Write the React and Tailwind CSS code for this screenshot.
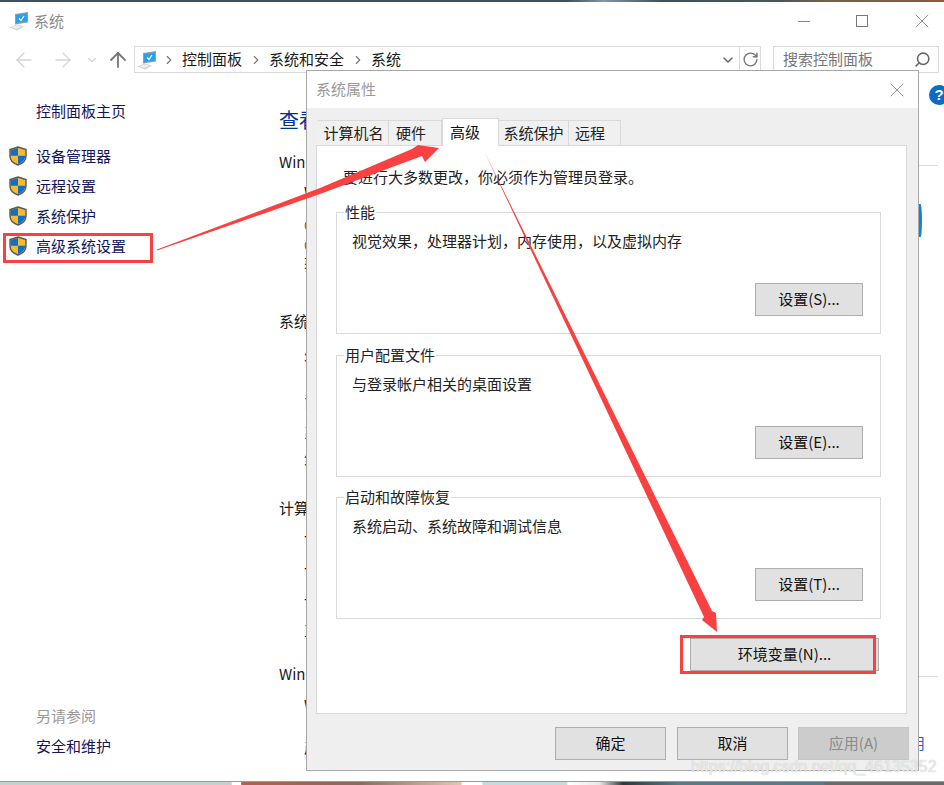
import { Search, ArrowLeft, ArrowRight, ArrowUp, ChevronDown, ChevronRight, RotateCw, X } from 'lucide-react'

function MonitorIcon({ className }) {
  return (
    <svg viewBox="0 0 20 20" className={className}>
      <path d="M0 16.500l8-3 7 2-7 4z" fill="#cfd2d5" />
      <path d="M2 16.500l6-2.200 4.500 1.300-5 2.400z" fill="#eceef0" />
      <path d="M6 3l13-2v10.500l-13 2z" fill="#8fa0ac" />
      <path d="M7 3.900l11-1.700v8.400l-11 1.700z" fill="#2aa0ea" />
      <path d="M10 7.500l2 2 3-4.500" fill="none" stroke="#fff" strokeWidth="1.200" />
    </svg>
  )
}

function Shield() {
  return (
    <svg viewBox="0 0 18 20" className="h-5 w-[18px] shrink-0">
      <path d="M9 1l8 2.500v6.500c0 4.500-3.500 7.500-8 9-4.500-1.500-8-4.500-8-9v-6.500z" fill="#f7b92f" stroke="#57585a" strokeWidth="1.400" />
      <path d="M9 1.900v7.900h-7.300v-5.700zM9 9.800h7.300c-.1 4.200-3.300 6.700-7.300 8.200z" fill="#0f6fc6" />
    </svg>
  )
}

function SideLink({ children }) {
  return (
    <div className="flex h-[30px] items-center pl-[9px]">
      <Shield />
      <span className="ml-[9px] text-[#14145c]">{children}</span>
    </div>
  )
}

function Line({ className, children }) {
  return <div className={`h-5 whitespace-nowrap leading-5 ${className}`}>{children}</div>
}

function Crumb({ children }) {
  return (
    <>
      <ChevronRight className="ml-[5px] mr-[4px] h-[14px] w-[14px] text-[#777]" strokeWidth={2} />
      <span className="mx-[2px] text-[#1a1a1a]">{children}</span>
    </>
  )
}

function GrayButton({ className, disabled, children }) {
  return (
    <div
      className={`flex h-[33px] items-center justify-center border ${
        disabled ? 'border-[#c6c6c6] bg-[#cccccc] text-[#8a8a8a]' : 'border-[#adadad] bg-[#e1e1e1] text-[#111]'
      } ${className}`}
    >
      {children}
    </div>
  )
}

function Group({ title, text, button, className }) {
  return (
    <fieldset className={`flex h-[132px] flex-col border border-[#d9d9d9] ${className}`}>
      <legend className="ml-[7px] h-5 px-px leading-5 text-[#222]">{title}</legend>
      <div className="ml-[15px] mt-[9px] h-5 leading-5 text-[#222]">{text}</div>
      <GrayButton className="mb-[15px] mr-[17px] mt-[32px] w-[108px] self-end">{button}</GrayButton>
    </fieldset>
  )
}

const tabClass = 'flex h-[25px] items-center border border-b-0 border-l-0 border-[#d9d9d9] bg-[#f0f0f0] text-[#222]'

function SystemProperties() {
  return (
    <div className="absolute left-[306px] top-[70px] flex h-[701px] w-[613px] flex-col border border-[#a8a8a8] bg-white">
      <div className="flex h-[37px] shrink-0 items-center justify-between pl-[9px] pr-[9px]">
        <span className="text-[#9a9a9a]">系统属性</span>
        <X className="h-6 w-6 text-[#777]" strokeWidth={0.800} />
      </div>
      <div className="flex flex-1 flex-col bg-[#efefef] pl-[9px] pr-[10px] pt-[10px]">
        <div className="z-10 flex h-[27px] items-end pl-[2px]">
          <div className={`${tabClass} w-[71px] justify-center border-l pl-px`}>计算机名</div>
          <div className={`${tabClass} w-[53px] pl-[7px]`}>硬件</div>
          <div className="mb-[-1px] flex h-[28px] w-[57px] items-start border border-b-0 border-[#d9d9d9] bg-white pl-[7px] pt-[2px] text-[#111]">高级</div>
          <div className={`${tabClass} w-[70px] justify-center`}>系统保护</div>
          <div className={`${tabClass} w-[52px] pl-[6px]`}>远程</div>
        </div>
        <div className="flex h-[569px] w-[591px] flex-col border border-[#d9d9d9] bg-white pl-[19px] pr-[25px]">
          <div className="ml-[7px] mt-[21px] h-5 leading-5 text-[#222]">要进行大多数更改，你必须作为管理员登录。</div>
          <Group className="mt-[15px]" title="性能" text="视觉效果，处理器计划，内存使用，以及虚拟内存" button="设置(S)..." />
          <Group className="mt-[11px]" title="用户配置文件" text="与登录帐户相关的桌面设置" button="设置(E)..." />
          <Group className="mt-[10px]" title="启动和故障恢复" text="系统启动、系统故障和调试信息" button="设置(T)..." />
          <GrayButton className="mr-[2px] mt-[19px] w-[189px] self-end">环境变量(N)...</GrayButton>
        </div>
        <div className="mr-[-1px] mt-[13px] flex justify-end gap-[11px]">
          <GrayButton className="w-[111px]">确定</GrayButton>
          <GrayButton className="w-[111px]">取消</GrayButton>
          <GrayButton disabled className="ml-[-1px] w-[111px]">应用(A)</GrayButton>
        </div>
      </div>
    </div>
  )
}

export default function App() {
  return (
    <div className="relative flex h-[785px] w-[944px] flex-col overflow-hidden bg-white font-['Microsoft_YaHei','Noto_Sans_CJK_SC',sans-serif] text-[15px]">
      <div className="h-[2px] shrink-0 bg-[linear-gradient(90deg,#3d525c_0%,#3d525c_60%,#7f98a2_64%,#3d525c_70%,#46565c_82%,#7a6248_88%,#8a5a3a_100%)]" />

      {/* control panel window */}
      <div className="flex min-h-0 flex-1 flex-col">
        <div className="flex h-[38px] shrink-0 items-center pl-[9px]">
          <MonitorIcon className="h-5 w-5" />
          <span className="ml-[5px] text-[#8a8a8a]">系统</span>
          <div className="ml-auto h-px w-3 bg-[#888]" />
          <div className="ml-[46px] h-3 w-3 border border-[#777]" />
          <X className="ml-[42px] mr-[10px] h-6 w-6 text-[#777]" strokeWidth={0.800} />
        </div>

        <div className="mt-[6px] flex h-[27px] shrink-0 items-center pl-[12px]">
          <ArrowLeft className="h-6 w-6 text-[#d4d4d4]" strokeWidth={1.300} />
          <ArrowRight className="ml-[15px] h-6 w-6 text-[#d4d4d4]" strokeWidth={1.300} />
          <ChevronDown className="ml-[10px] h-[14px] w-[14px] text-[#d4d4d4]" strokeWidth={2} />
          <ArrowUp className="ml-[7px] h-6 w-6 text-[#777]" strokeWidth={1.800} />
          <div className="ml-[4px] flex h-[27px] w-[627px] items-center border border-[#d9d9d9] pl-[2px]">
            <MonitorIcon className="h-5 w-5" />
            <Crumb>控制面板</Crumb>
            <Crumb>系统和安全</Crumb>
            <Crumb>系统</Crumb>
            <ChevronDown className="ml-auto mr-[3px] h-[16px] w-[16px] text-[#666]" strokeWidth={2.200} />
            <div className="flex h-full w-[21px] items-center justify-center border-l border-[#d9d9d9]">
              <RotateCw className="h-[17px] w-[17px] text-[#777]" strokeWidth={2} />
            </div>
          </div>
          <div className="ml-[12px] flex h-[27px] w-[166px] items-center justify-between border border-[#d9d9d9] pl-[9px] pr-[7px] text-[#777]">
            <span>搜索控制面板</span>
            <Search className="h-[17px] w-[17px] -scale-x-100 text-[#666]" strokeWidth={2.200} />
          </div>
        </div>

        <div className="mt-[24px] flex min-h-0 flex-1">
          <aside className="flex w-[279px] shrink-0 flex-col">
            <div className="mt-[-1px] flex h-[30px] items-center pl-[36px] text-[#14145c]">控制面板主页</div>
            <div className="mt-[15px]">
              <SideLink>设备管理器</SideLink>
              <SideLink>远程设置</SideLink>
              <SideLink>系统保护</SideLink>
              <SideLink>高级系统设置</SideLink>
            </div>
            <div className="mt-auto pb-[20px] pl-[36px]">
              <div className="flex h-[30px] items-center text-[#999]">另请参阅</div>
              <div className="flex h-[30px] items-center text-[#14145c]">安全和维护</div>
            </div>
          </aside>

          {/* the dialog covers this column, only the first glyphs peek out */}
          <main className="w-[27px] shrink-0 text-[#1a1a1a]">
            <div className="flex h-[46px] items-center whitespace-nowrap text-[20px] text-[#003399]">查看</div>
            <Line className="mt-[9px]">Win</Line>
            <Line className="ml-[25px] mt-[10px]">W</Line>
            <Line className="ml-[25px] mt-[13px]">©</Line>
            <Line className="ml-[25px]">©</Line>
            <Line className="ml-[25px] mt-[-1px]">获</Line>
            <Line className="mt-[37px]">系统</Line>
            <Line className="ml-[25px] mt-[13px]">处</Line>
            <Line className="ml-[25px] mt-[30px]">已</Line>
            <Line className="ml-[25px] mt-[8px]">系</Line>
            <Line className="ml-[25px] mt-[8px]">笔</Line>
            <Line className="mt-[28px]">计算</Line>
            <Line className="ml-[25px] mt-[10px]">计</Line>
            <Line className="ml-[25px] mt-[12px]">计</Line>
            <Line className="ml-[25px] mt-[11px]">计</Line>
            <Line className="ml-[25px] mt-[9px]">工</Line>
            <Line className="mt-[24px]">Win</Line>
            <Line className="ml-[25px] mt-[11px]">W</Line>
            <Line className="ml-[25px] mt-[22px]">产</Line>
          </main>
        </div>
      </div>

      <div className="h-[4px] shrink-0 border-t border-[#9a9a9a] bg-[linear-gradient(90deg,#c5d2d0_0%,#c5d2d0_24.500%,#fff_24.600%,#fff_25.500%,#b4604c_25.600%,#8a6a5c_38%,#e0c8b0_48.800%,#fff_49%,#fff_51%,#c5dcdc_51.200%,#c5dcdc_60%,#fff_60.200%,#e8e8e8_63.500%,#30383c_66%,#5c7a85_72%,#5c7a85_87.300%,#6a6a6a_87.400%,#6a6a6a_100%)]" />

      {/* help button and logo edge showing past the dialog */}
      <div className="absolute left-[929px] top-[85px] flex h-5 w-5 items-center justify-center rounded-full bg-[#0a6cc4] font-['Liberation_Sans'] text-[15px] font-bold text-white">?</div>
      <div className="absolute left-[919px] top-[165px] h-px w-[19px] bg-[#d9d9d9]" />
      <div className="absolute left-[919px] top-[676px] h-px w-[19px] bg-[#d9d9d9]" />
      <div className="absolute left-[919px] top-[204px] h-[33px] w-[3px] rounded-r-[100%] bg-[#1282d6]" />
      <div className="absolute left-[910px] top-[733px] h-5 leading-5 text-[#0a6cc4]">用</div>

      <SystemProperties />

      {/* annotations */}
      <svg className="pointer-events-none absolute left-0 top-0 h-[785px] w-[944px]" viewBox="0 0 944 785">
        <g fill="#fa4141">
          <path d="M157 249.500L320 188 412 149 418 145 439 148 425 162 422 156 320 194 157 250.500z" />
          <path d="M484 151L600 385 712 611 716 613 717 632 702 620 704 617 596 388z" />
        </g>
        <g fill="none" stroke="#fa4141" strokeWidth="3">
          <rect x="4.500" y="234.500" width="147" height="27" />
          <rect x="681.500" y="636.500" width="193" height="36" />
        </g>
      </svg>

      <span className="pointer-events-none absolute left-[691px] top-[755px] font-['Liberation_Sans'] text-[16px] text-[#ffffffb0] [text-shadow:0_0_1px_#b0b0b0]">https://blog.csdn.net/qq_46135352</span>
    </div>
  )
}
